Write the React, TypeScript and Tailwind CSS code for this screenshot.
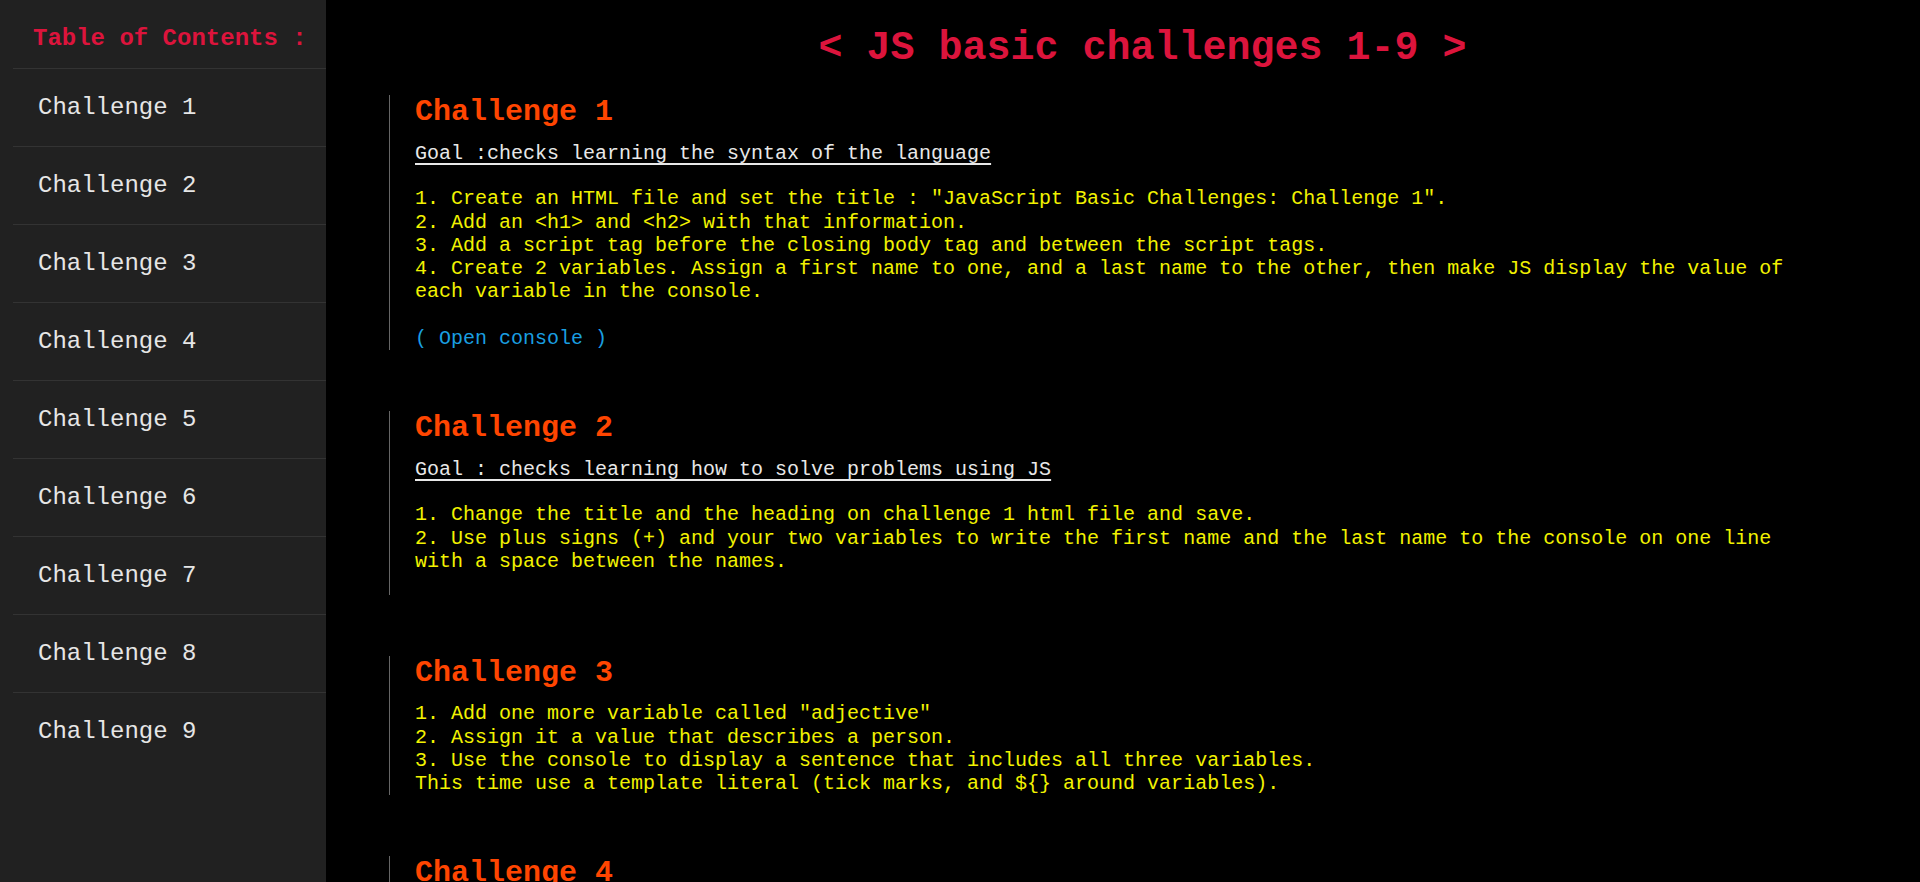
const challenges = [
  {
    n: 1,
    goal: 'Goal :checks learning the syntax of the language',
    lines: [
      '1. Create an HTML file and set the title : "JavaScript Basic Challenges: Challenge 1".',
      '2. Add an <h1> and <h2> with that information.',
      '3. Add a script tag before the closing body tag and between the script tags.',
      '4. Create 2 variables. Assign a first name to one, and a last name to the other, then make JS display the value of each variable in the console.',
    ],
    console: true,
    trailing: false,
  },
  {
    n: 2,
    goal: 'Goal : checks learning how to solve problems using JS',
    lines: [
      '1. Change the title and the heading on challenge 1 html file and save.',
      '2. Use plus signs (+) and your two variables to write the first name and the last name to the console on one line with a space between the names.',
    ],
    console: false,
    trailing: true,
  },
  {
    n: 3,
    goal: '',
    lines: [
      '1. Add one more variable called "adjective"',
      '2. Assign it a value that describes a person.',
      '3. Use the console to display a sentence that includes all three variables.',
      'This time use a template literal (tick marks, and ${} around variables).',
    ],
    console: false,
    trailing: false,
  },
  {
    n: 4,
    goal: 'Goal : checks learning how to use functions',
    lines: ['1. Write a function that takes your name as a parameter.'],
    console: false,
    trailing: false,
  },
]

export default function App() {
  return (
    <div className="flex min-h-screen bg-black font-['Liberation_Mono','Courier_New',monospace]">
      <aside className="sticky top-0 h-screen w-[326px] shrink-0 bg-[#212121] pl-[13px]">
        <h3 className="pl-[20px] pt-[25px] pb-[16px] text-[24px] leading-[27px] font-bold text-[#dc143c]">Table of Contents :</h3>
        <ul>
          {[1, 2, 3, 4, 5, 6, 7, 8, 9].map((n) => (
            <li key={n} className="border-t border-[#333] py-[25px] pl-[25px] text-[24px] leading-[27px] text-[#e6e6e6]">
              Challenge {n}
            </li>
          ))}
        </ul>
      </aside>

      <main className="flex-1 pl-[63px] pr-[24px]">
        <h1 className="pt-[26px] pb-[24px] text-center text-[40px] leading-[45px] font-bold text-[#dc143c]">&lt; JS basic challenges 1-9 &gt;</h1>
        <div className="flex flex-col gap-[61px] pb-20">
          {challenges.map((c) => (
            <section key={c.n} className="border-l border-[#666] pl-[25px] pr-[81px]">
              <h2 className="text-[30px] leading-[34px] font-bold text-[#ff4500]">Challenge {c.n}</h2>
              {c.goal && <p className="mt-[13px] text-[20px] leading-[23.3px] text-[#e8e8e8] underline underline-offset-[4px]">{c.goal}</p>}
              <div className={`${c.goal ? 'mt-[22px]' : 'mt-[12px]'} text-[20px] leading-[23.3px] text-[#f2f200]`}>
                {c.lines.map((l, i) => <p key={i}>{l}</p>)}
                {c.trailing && <p className="h-[22px]" />}
              </div>
              {c.console && <p className="mt-[23px] text-[20px] leading-[23.3px] text-[#1a9fe0]">( Open console )</p>}
            </section>
          ))}
        </div>
      </main>
    </div>
  )
}
